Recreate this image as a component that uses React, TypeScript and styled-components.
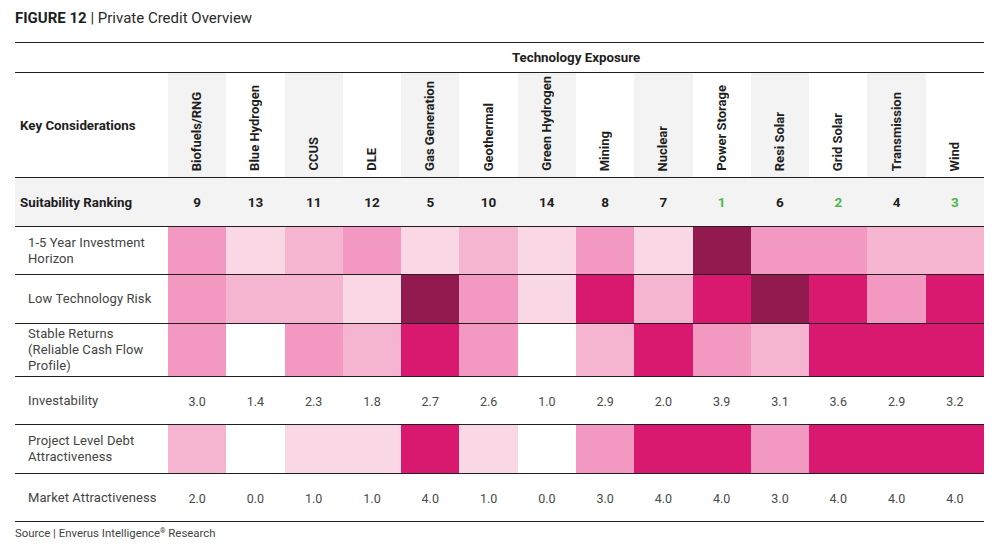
import React from "react";
import styled, { createGlobalStyle } from "styled-components";

const GlobalStyle = createGlobalStyle`
  html, body { margin: 0; padding: 0; background: #ffffff; }
  body { font-family: Roboto, "Liberation Sans", Arial, sans-serif; }
  * { box-sizing: border-box; }
`;

const C = {
  w: "#ffffff",
  l1: "#f9d7e4",
  l2: "#f5b5d0",
  l3: "#f398c0",
  m: "#d91870",
  d: "#921a4e",
};

type Level = keyof typeof C;

const techs = [
  "Biofuels/RNG",
  "Blue Hydrogen",
  "CCUS",
  "DLE",
  "Gas Generation",
  "Geothermal",
  "Green Hydrogen",
  "Mining",
  "Nuclear",
  "Power Storage",
  "Resi Solar",
  "Grid Solar",
  "Transmission",
  "Wind",
];

const ranks = [9, 13, 11, 12, 5, 10, 14, 8, 7, 1, 6, 2, 4, 3];

type Row =
  | { kind: "heat"; label: string[]; h: number; cells: Level[] }
  | { kind: "num"; label: string[]; h: number; values: string[] };

const rows: Row[] = [
  {
    kind: "heat",
    label: ["1-5 Year Investment", "Horizon"],
    h: 48,
    cells: ["l3", "l1", "l2", "l3", "l1", "l2", "l1", "l3", "l1", "d", "l3", "l3", "l2", "l2"],
  },
  {
    kind: "heat",
    label: ["Low Technology Risk"],
    h: 49,
    cells: ["l3", "l2", "l2", "l1", "d", "l3", "l1", "m", "l2", "m", "d", "m", "l3", "m"],
  },
  {
    kind: "heat",
    label: ["Stable Returns", "(Reliable Cash Flow", "Profile)"],
    h: 53,
    cells: ["l3", "w", "l3", "l2", "m", "l3", "w", "l2", "m", "l3", "l2", "m", "m", "m"],
  },
  {
    kind: "num",
    label: ["Investability"],
    h: 48,
    values: ["3.0", "1.4", "2.3", "1.8", "2.7", "2.6", "1.0", "2.9", "2.0", "3.9", "3.1", "3.6", "2.9", "3.2"],
  },
  {
    kind: "heat",
    label: ["Project Level Debt", "Attractiveness"],
    h: 49,
    cells: ["l2", "w", "l1", "l1", "m", "l1", "w", "l3", "m", "m", "l3", "m", "m", "m"],
  },
  {
    kind: "num",
    label: ["Market Attractiveness"],
    h: 48,
    values: ["2.0", "0.0", "1.0", "1.0", "4.0", "1.0", "0.0", "3.0", "4.0", "4.0", "3.0", "4.0", "4.0", "4.0"],
  },
];

const Page = styled.div`
  width: 1003px;
  height: 550px;
  padding: 0 19px 0 15px;
  overflow: hidden;
`;

const Title = styled.div`
  height: 42px;
  padding-top: 9px;
  font-size: 15px;
  color: #2b2b2b;
  line-height: 18px;
  b { font-weight: 700; color: #1e1e1e; }
`;

const Table = styled.div`
  width: 969px;
  border-top: 1px solid #231f20;
`;

const GridRow = styled.div<{ $h: number; $bg?: string }>`
  display: grid;
  grid-template-columns: 153px repeat(14, 1fr);
  height: ${(p) => p.$h}px;
  border-bottom: 1px solid #231f20;
  background: ${(p) => p.$bg || "transparent"};
`;

const TechTitle = styled.div`
  grid-column: 2 / span 14;
  display: flex;
  align-items: center;
  justify-content: center;
  font-size: 13.3px;
  font-weight: 700;
  color: #1e1e1e;
`;

const BoldLabel = styled.div`
  display: flex;
  align-items: center;
  padding-left: 5px;
  font-size: 13.3px;
  font-weight: 700;
  color: #1e1e1e;
`;

const HeadCell = styled.div<{ $shade: boolean }>`
  background: ${(p) => (p.$shade ? "#f3f3f3" : "transparent")};
  display: flex;
  justify-content: center;
  align-items: flex-end;
  padding-bottom: 6px;
`;

const Vertical = styled.span`
  writing-mode: vertical-rl;
  transform: rotate(180deg);
  font-size: 13px;
  font-weight: 700;
  color: #1e1e1e;
  white-space: nowrap;
  line-height: 14px;
`;

const RankCell = styled.div<{ $top: boolean }>`
  display: flex;
  align-items: center;
  justify-content: center;
  font-size: 13.5px;
  font-weight: 700;
  color: ${(p) => (p.$top ? "#4db848" : "#1e1e1e")};
`;

const Label = styled.div`
  display: flex;
  flex-direction: column;
  justify-content: center;
  padding-left: 13px;
  font-size: 13px;
  line-height: 16px;
  color: #444444;
  letter-spacing: 0.1px;
`;

const Heat = styled.div<{ $c: string }>`
  background: ${(p) => p.$c};
`;

const Num = styled.div`
  display: flex;
  align-items: center;
  justify-content: center;
  padding-top: 2px;
  font-size: 12.5px;
  color: #4a4a4a;
`;

const Source = styled.div`
  padding-top: 4px;
  font-size: 11.4px;
  color: #444444;
  sup { font-size: 7px; font-weight: 700; vertical-align: 4px; }
`;

export default function App() {
  return (
    <>
      <GlobalStyle />
      <Page>
        <Title>
          <b>FIGURE 12</b> | Private Credit Overview
        </Title>
        <Table>
          <GridRow $h={30}>
            <div />
            <TechTitle>Technology Exposure</TechTitle>
          </GridRow>
          <GridRow $h={105}>
            <BoldLabel>Key Considerations</BoldLabel>
            {techs.map((t, i) => (
              <HeadCell key={t} $shade={i % 2 === 0}>
                <Vertical>{t}</Vertical>
              </HeadCell>
            ))}
          </GridRow>
          <GridRow $h={49} $bg="#f3f3f3">
            <BoldLabel>Suitability Ranking</BoldLabel>
            {ranks.map((r, i) => (
              <RankCell key={i} $top={r <= 3}>
                {r}
              </RankCell>
            ))}
          </GridRow>
          {rows.map((row, ri) => (
            <GridRow key={ri} $h={row.h}>
              <Label>
                {row.label.map((l) => (
                  <span key={l}>{l}</span>
                ))}
              </Label>
              {row.kind === "heat"
                ? row.cells.map((c, i) => <Heat key={i} $c={C[c]} />)
                : row.values.map((v, i) => <Num key={i}>{v}</Num>)}
            </GridRow>
          ))}
        </Table>
        <Source>
          Source | Enverus Intelligence<sup>®</sup> Research
        </Source>
      </Page>
    </>
  );
}
